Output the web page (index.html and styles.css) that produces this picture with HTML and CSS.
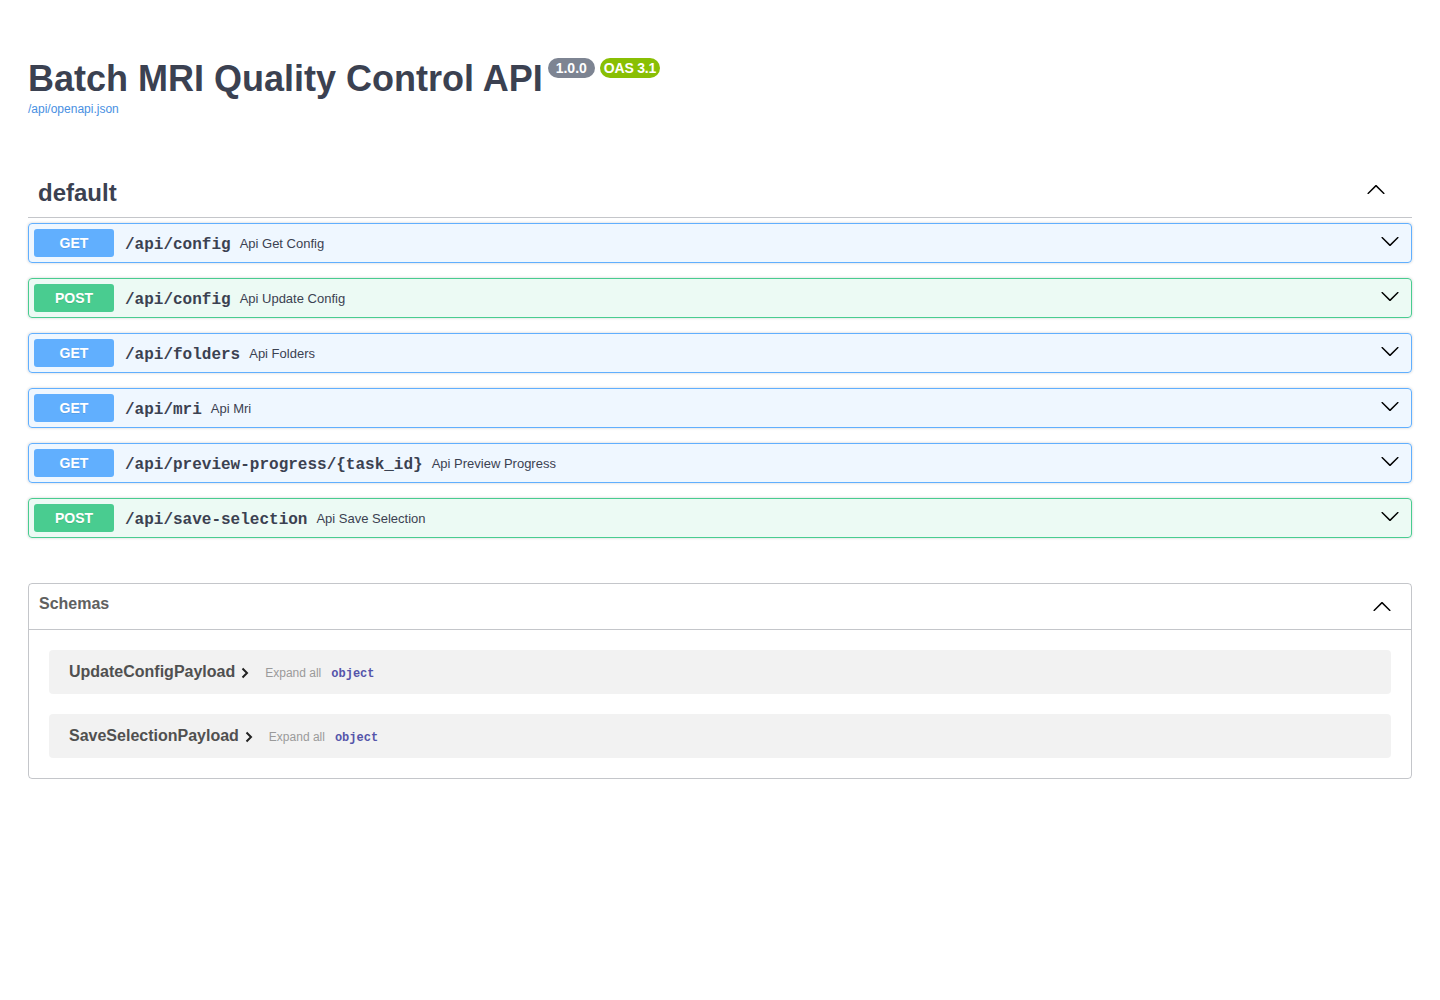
FILE: index.html
```html
<!DOCTYPE html>
<html lang="en">
<head>
<meta charset="utf-8">
<title>Batch MRI Quality Control API</title>
<link rel="stylesheet" href="styles.css">
</head>
<body>
<div class="wrapper">
  <section class="info">
    <h2 class="title">
      <span class="title-text">Batch MRI Quality Control API</span>
      <small class="stamp stamp-version">1.0.0</small>
      <small class="stamp stamp-oas">OAS 3.1</small>
    </h2>
    <a class="spec-link" href="#">/api/openapi.json</a>
  </section>

  <section class="tag-section">
    <h3 class="tag-header">
      <span>default</span>
      <svg class="arrow arrow-tag" viewBox="0 0 20 20"><path d="M17.418 14.908c.272.268.709.268.979 0s.271-.701 0-.969l-7.908-7.83c-.27-.268-.707-.268-.979 0l-7.908 7.83c-.27.268-.27.701 0 .969.271.268.709.268.979 0L10 7.767l7.418 7.141z"/></svg>
    </h3>
    <div class="opblocks">
      <div class="opblock get">
        <span class="method">GET</span>
        <span class="path">/api/config</span>
        <span class="desc">Api Get Config</span>
        <svg class="arrow" viewBox="0 0 20 20"><path d="M17.418 6.109c.272-.268.709-.268.979 0s.271.701 0 .969l-7.908 7.83c-.27.268-.707.268-.979 0l-7.908-7.83c-.27-.268-.27-.701 0-.969.271-.268.709-.268.979 0L10 13.25l7.418-7.141z"/></svg>
      </div>
      <div class="opblock post">
        <span class="method">POST</span>
        <span class="path">/api/config</span>
        <span class="desc">Api Update Config</span>
        <svg class="arrow" viewBox="0 0 20 20"><path d="M17.418 6.109c.272-.268.709-.268.979 0s.271.701 0 .969l-7.908 7.83c-.27.268-.707.268-.979 0l-7.908-7.83c-.27-.268-.27-.701 0-.969.271-.268.709-.268.979 0L10 13.25l7.418-7.141z"/></svg>
      </div>
      <div class="opblock get">
        <span class="method">GET</span>
        <span class="path">/api/folders</span>
        <span class="desc">Api Folders</span>
        <svg class="arrow" viewBox="0 0 20 20"><path d="M17.418 6.109c.272-.268.709-.268.979 0s.271.701 0 .969l-7.908 7.83c-.27.268-.707.268-.979 0l-7.908-7.83c-.27-.268-.27-.701 0-.969.271-.268.709-.268.979 0L10 13.25l7.418-7.141z"/></svg>
      </div>
      <div class="opblock get">
        <span class="method">GET</span>
        <span class="path">/api/mri</span>
        <span class="desc">Api Mri</span>
        <svg class="arrow" viewBox="0 0 20 20"><path d="M17.418 6.109c.272-.268.709-.268.979 0s.271.701 0 .969l-7.908 7.83c-.27.268-.707.268-.979 0l-7.908-7.83c-.27-.268-.27-.701 0-.969.271-.268.709-.268.979 0L10 13.25l7.418-7.141z"/></svg>
      </div>
      <div class="opblock get">
        <span class="method">GET</span>
        <span class="path">/api/preview-progress/{task_id}</span>
        <span class="desc">Api Preview Progress</span>
        <svg class="arrow" viewBox="0 0 20 20"><path d="M17.418 6.109c.272-.268.709-.268.979 0s.271.701 0 .969l-7.908 7.83c-.27.268-.707.268-.979 0l-7.908-7.83c-.27-.268-.27-.701 0-.969.271-.268.709-.268.979 0L10 13.25l7.418-7.141z"/></svg>
      </div>
      <div class="opblock post">
        <span class="method">POST</span>
        <span class="path">/api/save-selection</span>
        <span class="desc">Api Save Selection</span>
        <svg class="arrow" viewBox="0 0 20 20"><path d="M17.418 6.109c.272-.268.709-.268.979 0s.271.701 0 .969l-7.908 7.83c-.27.268-.707.268-.979 0l-7.908-7.83c-.27-.268-.27-.701 0-.969.271-.268.709-.268.979 0L10 13.25l7.418-7.141z"/></svg>
      </div>
    </div>
  </section>

  <section class="models">
    <h4 class="models-header">
      <span>Schemas</span>
      <svg class="arrow arrow-models" viewBox="0 0 20 20"><path d="M17.418 14.908c.272.268.709.268.979 0s.271-.701 0-.969l-7.908-7.83c-.27-.268-.707-.268-.979 0l-7.908 7.83c-.27.268-.27.701 0 .969.271.268.709.268.979 0L10 7.767l7.418 7.141z"/></svg>
    </h4>
    <div class="models-body">
      <div class="model-container">
        <span class="model-title">UpdateConfigPayload</span>
        <svg class="model-toggle" viewBox="0 0 8 12"><path d="M1.5 1.5 L6 6 L1.5 10.5"/></svg>
        <span class="expand-all">Expand all</span>
        <span class="prop-type">object</span>
      </div>
      <div class="model-container">
        <span class="model-title">SaveSelectionPayload</span>
        <svg class="model-toggle" viewBox="0 0 8 12"><path d="M1.5 1.5 L6 6 L1.5 10.5"/></svg>
        <span class="expand-all">Expand all</span>
        <span class="prop-type">object</span>
      </div>
    </div>
  </section>
</div>
</body>
</html>
```

FILE: styles.css
```css
html, body {
  margin: 0;
  padding: 0;
  background: #fff;
}

body {
  font-family: "Liberation Sans", Arial, sans-serif;
  color: #3b4151;
}

.wrapper {
  padding: 0 28px;
}

/* ---- info header ---- */
.info {
  padding-top: 58px;
}

.title {
  display: flex;
  align-items: flex-start;
  margin: 0;
  font-size: 36px;
  line-height: 42px;
  font-weight: 700;
  color: #3b4151;
}

.stamp {
  display: inline-block;
  margin-top: 0;
  height: 20px;
  line-height: 20px;
  border-radius: 57px;
  font-size: 14px;
  font-weight: 700;
  color: #fff;
}

.stamp-version {
  margin-left: 5px;
  padding: 0 8px;
  background: #7d8492;
}

.stamp-oas {
  margin-left: 5px;
  padding: 0 4px;
  letter-spacing: -0.2px;
  background: #89bf04;
}

.spec-link {
  display: block;
  margin-top: 2px;
  font-size: 12px;
  line-height: 14px;
  color: #4990e2;
  text-decoration: none;
}

/* ---- operations tag ---- */
.tag-section {
  margin-top: 52px;
}

.tag-header {
  display: flex;
  align-items: center;
  justify-content: space-between;
  margin: 0 0 5px;
  padding: 10px 25px 10px 10px;
  font-size: 24px;
  line-height: 29px;
  font-weight: 700;
  border-bottom: 1px solid rgba(59, 65, 81, 0.3);
}

.arrow {
  width: 20px;
  height: 20px;
  fill: #000;
  flex: none;
}

.arrow-tag {
  margin-top: -7px;
  margin-right: 1px;
}

.opblocks {
  display: flex;
  flex-direction: column;
  gap: 15px;
}

.opblock {
  display: flex;
  align-items: center;
  height: 28px;
  padding: 5px 11px 5px 5px;
  border: 1px solid;
  border-radius: 4px;
  box-shadow: 0 0 3px rgba(0, 0, 0, 0.19);
}

.opblock .arrow {
  margin-left: auto;
  margin-top: -5px;
}

.opblock.get {
  border-color: #61affe;
  background: rgba(97, 175, 254, 0.1);
}

.opblock.post {
  border-color: #49cc90;
  background: rgba(73, 204, 144, 0.1);
}

.method {
  width: 80px;
  height: 28px;
  line-height: 28px;
  text-align: center;
  border-radius: 3px;
  font-size: 14px;
  font-weight: 700;
  color: #fff;
  text-shadow: 0 1px 0 rgba(0, 0, 0, 0.1);
}

.get .method {
  background: #61affe;
}

.post .method {
  background: #49cc90;
}

.path {
  padding: 4px 9px 0 11px;
  font-family: "Liberation Mono", "Courier New", monospace;
  font-size: 16px;
  font-weight: 700;
  color: #3b4151;
}

.desc {
  font-size: 13px;
  color: #3b4151;
}

/* ---- schemas ---- */
.models {
  margin-top: 45px;
  border: 1px solid rgba(59, 65, 81, 0.3);
  border-radius: 4px;
}

.models-header {
  display: flex;
  align-items: center;
  justify-content: space-between;
  margin: 0;
  padding: 8px 19px 13px 10px;
  font-size: 16px;
  line-height: 24px;
  font-weight: 700;
  color: #606060;
  border-bottom: 1px solid rgba(59, 65, 81, 0.3);
}

.arrow-models {
  margin-top: 3px;
}

.models-body {
  display: flex;
  flex-direction: column;
  gap: 20px;
  padding: 20px 20px;
}

.model-container {
  display: flex;
  align-items: center;
  height: 44px;
  padding: 0 20px;
  border-radius: 4px;
  background: rgba(0, 0, 0, 0.05);
}

.model-title {
  font-size: 16px;
  font-weight: 700;
  color: #505050;
}

.model-toggle {
  width: 8px;
  height: 12px;
  margin: 2px 0 0 6px;
  fill: none;
  stroke: #222;
  stroke-width: 2;
}

.expand-all {
  margin-left: 16px;
  font-size: 12px;
  color: #9a9a9a;
  margin-top: 2px;
}

.prop-type {
  margin-left: 10px;
  margin-top: 3px;
  font-family: "Liberation Mono", "Courier New", monospace;
  font-size: 12px;
  font-weight: 700;
  color: #55a;
}
```
